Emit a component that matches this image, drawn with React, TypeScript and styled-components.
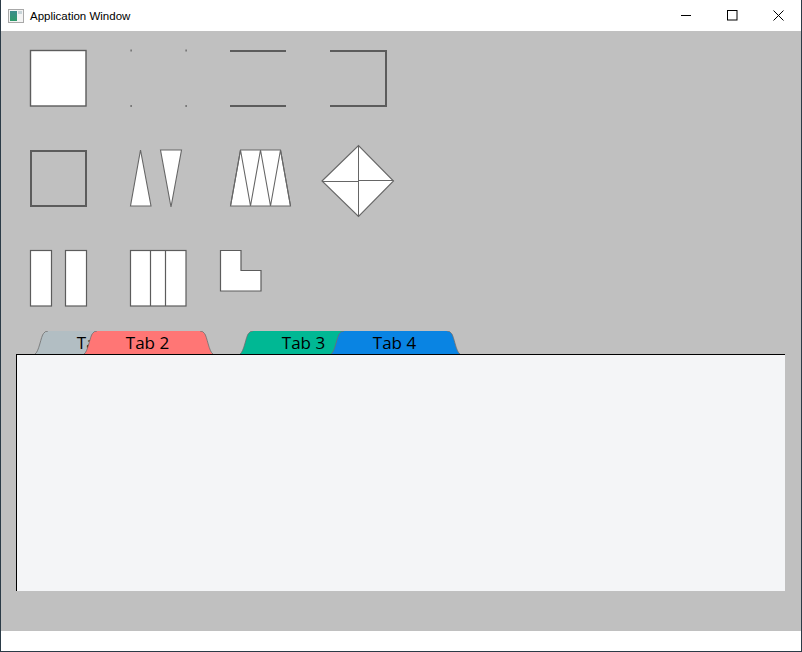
import React from "react";
import styled, { createGlobalStyle } from "styled-components";

const Global = createGlobalStyle`
  html, body { margin: 0; padding: 0; background: #ffffff; }
  body { font-family: "Segoe UI", "Open Sans", "Liberation Sans", sans-serif; }
  * { box-sizing: border-box; }
`;

const Window = styled.div`
  width: 802px;
  height: 652px;
  display: flex;
  flex-direction: column;
  border: 1px solid #2b3b47;
  border-top: none;
  background: #ffffff;
  overflow: hidden;
`;

const TitleBar = styled.div`
  height: 31px;
  flex: none;
  display: flex;
  align-items: center;
  background: #ffffff;
`;

const AppIcon = styled.svg`
  width: 16px;
  height: 14px;
  margin-left: 7px;
  margin-right: 6px;
  flex: none;
`;

const Title = styled.span`
  font-family: "Segoe UI", "Liberation Sans", sans-serif;
  font-size: 11.5px;
  color: #000000;
  flex: 1;
  padding-top: 1px;
`;

const Controls = styled.div`
  display: flex;
  height: 100%;
`;

const ControlButton = styled.div`
  width: 46px;
  height: 100%;
  display: flex;
  align-items: center;
  justify-content: center;
`;

const Client = styled.div`
  flex: 1;
  background: #c0c0c0;
  display: flex;
  flex-direction: column;
`;

const ShapeGrid = styled.div`
  display: grid;
  grid-template-columns: repeat(4, 100px);
  grid-template-rows: 100px 100px 91px;
  padding: 9px 0 0 19px;
`;

const Cell = styled.svg`
  width: 100px;
  height: 100px;
  overflow: visible;
  display: block;
`;

const TabStrip = styled.div`
  display: flex;
  height: 23px;
  margin-left: 15px;
`;

const Tab = styled.div<{ $offset: number; $z: number }>`
  position: relative;
  width: 129px;
  height: 23px;
  flex: none;
  margin-left: ${(p) => p.$offset}px;
  z-index: ${(p) => p.$z};
  display: flex;
  align-items: center;
  justify-content: center;
  font-family: "Segoe UI", "Open Sans", sans-serif;
  font-size: 17px;
  color: #000000;
`;

const TabShape = styled.svg`
  position: absolute;
  inset: 0;
  width: 100%;
  height: 100%;
  z-index: 0;
`;

const TabLabel = styled.span`
  position: relative;
  z-index: 1;
  line-height: 23px;
  margin-left: -2px;
`;

const Panel = styled.div`
  margin-left: 15px;
  width: 769px;
  height: 237px;
  background: #f4f5f7;
  border-top: 1px solid #000000;
  border-left: 1px solid #000000;
`;

const StatusBar = styled.div`
  height: 20px;
  flex: none;
  background: #ffffff;
`;

const S = "#5c5c5c";

const tabPath =
  "M0,23 C4,21 6,5 8.5,2.5 Q10,0 13,0 L116,0 Q119,0 120.5,2.5 C123,5 125,21 129,23 Z";
const tabSides =
  "M0,23 C4,21 6,5 8.5,2.5 Q10,0 13,0 M116,0 Q119,0 120.5,2.5 C123,5 125,21 129,23";

const tabs = [
  { label: "Tab 1", color: "#b2bec3", offset: 19, z: 1 },
  { label: "Tab 2", color: "#ff7675", offset: -80, z: 2 },
  { label: "Tab 3", color: "#00b894", offset: 27, z: 3 },
  { label: "Tab 4", color: "#0984e3", offset: -38, z: 4 },
];

export default function App() {
  return (
    <>
      <Global />
      <Window>
        <TitleBar>
          <AppIcon viewBox="0 0 16 14">
            <defs>
              <linearGradient id="ig" x1="0" y1="0" x2="0" y2="1">
                <stop offset="0" stopColor="#3c8c8c" />
                <stop offset="1" stopColor="#2f9a6a" />
              </linearGradient>
            </defs>
            <rect x="0.5" y="0.5" width="15" height="13" fill="#f4f4f4" stroke="#a8a8a8" />
            <rect x="2" y="2" width="7" height="10" fill="url(#ig)" />
            <rect x="10" y="2" width="4" height="3" fill="#c8d4d8" />
          </AppIcon>
          <Title>Application Window</Title>
          <Controls>
            <ControlButton>
              <svg width="11" height="11" viewBox="0 0 11 11">
                <line x1="0" y1="5.5" x2="10" y2="5.5" stroke="#000" strokeWidth="1" />
              </svg>
            </ControlButton>
            <ControlButton>
              <svg width="11" height="11" viewBox="0 0 11 11">
                <rect x="0.5" y="0.5" width="9.5" height="9.5" fill="none" stroke="#000" strokeWidth="1" />
              </svg>
            </ControlButton>
            <ControlButton>
              <svg width="11" height="11" viewBox="0 0 11 11">
                <path d="M0.5,0.5 L10.5,10.5 M10.5,0.5 L0.5,10.5" stroke="#000" strokeWidth="1" />
              </svg>
            </ControlButton>
          </Controls>
        </TitleBar>
        <Client>
          <ShapeGrid>
            {/* Row 1 */}
            <Cell viewBox="0 0 100 100">
              <rect x="10.5" y="10.5" width="55.5" height="55.5" fill="#fff" stroke={S} strokeWidth="1.4" />
            </Cell>
            <Cell viewBox="0 0 100 100">
              <rect x="10.5" y="9.5" width="1.2" height="2" fill={S} />
              <rect x="65.5" y="9.5" width="1.2" height="2" fill={S} />
              <rect x="10.5" y="65" width="1.2" height="2" fill={S} />
              <rect x="65.5" y="65" width="1.2" height="2" fill={S} />
            </Cell>
            <Cell viewBox="0 0 100 100">
              <path d="M10,11 L66,11 M10,66 L66,66" stroke={S} strokeWidth="2" fill="none" />
            </Cell>
            <Cell viewBox="0 0 100 100">
              <path d="M10,11 L66,11 L66,66 L10,66" stroke={S} strokeWidth="2" fill="none" />
            </Cell>
            {/* Row 2 */}
            <Cell viewBox="0 0 100 100">
              <rect x="11" y="11" width="55" height="55" fill="none" stroke={S} strokeWidth="2" />
            </Cell>
            <Cell viewBox="0 0 100 100">
              <polygon points="20.5,10 10.5,66 31,66" fill="#fff" stroke="#666" strokeWidth="1.1" />
              <polygon points="40.5,10 61.5,10 51,67" fill="#fff" stroke="#666" strokeWidth="1.1" />
            </Cell>
            <Cell viewBox="0 0 100 100">
              <polygon points="10.5,66 20.5,10 60.5,10 70.5,66" fill="#fff" stroke="#666" strokeWidth="1.1" />
              <polyline
                points="10.5,66 20.5,10 30.5,66 40.5,10 50.5,66 60.5,10 70.5,66"
                fill="none"
                stroke="#666"
                strokeWidth="1.1"
              />
            </Cell>
            <Cell viewBox="0 0 100 100">
              <polygon points="2,41 38.5,5.5 73.5,41 38.5,76.5" fill="#fff" stroke="#666" strokeWidth="1.1" />
              <path d="M38.5,5.5 L38.5,76.5 M2,41.5 L38.5,41.5 M38.5,40.5 L73.5,40.5" stroke="#666" strokeWidth="1" fill="none" />
            </Cell>
            {/* Row 3 */}
            <Cell viewBox="0 0 100 100">
              <rect x="10.5" y="10.5" width="21" height="55.5" fill="#fff" stroke={S} strokeWidth="1.2" />
              <rect x="45.5" y="10.5" width="21" height="55.5" fill="#fff" stroke={S} strokeWidth="1.2" />
            </Cell>
            <Cell viewBox="0 0 100 100">
              <rect x="10.5" y="10.5" width="55.5" height="55.5" fill="#fff" stroke={S} strokeWidth="1.2" />
              <path d="M30.5,10.5 L30.5,66 M45.5,10.5 L45.5,66" stroke={S} strokeWidth="1.2" />
            </Cell>
            <Cell viewBox="0 0 100 100">
              <polygon points="0.5,10.5 21,10.5 21,30.5 41,30.5 41,51 0.5,51" fill="#fff" stroke={S} strokeWidth="1.2" />
            </Cell>
            <div />
          </ShapeGrid>
          <TabStrip>
            {tabs.map((t) => (
              <Tab key={t.label} $offset={t.offset} $z={t.z}>
                <TabShape viewBox="0 0 129 23" preserveAspectRatio="none">
                  <path d={tabPath} fill={t.color} />
                  <path d={tabSides} fill="none" stroke="#6f6f6f" strokeWidth="0.8" />
                </TabShape>
                <TabLabel>{t.label}</TabLabel>
              </Tab>
            ))}
          </TabStrip>
          <Panel />
        </Client>
        <StatusBar />
      </Window>
    </>
  );
}
